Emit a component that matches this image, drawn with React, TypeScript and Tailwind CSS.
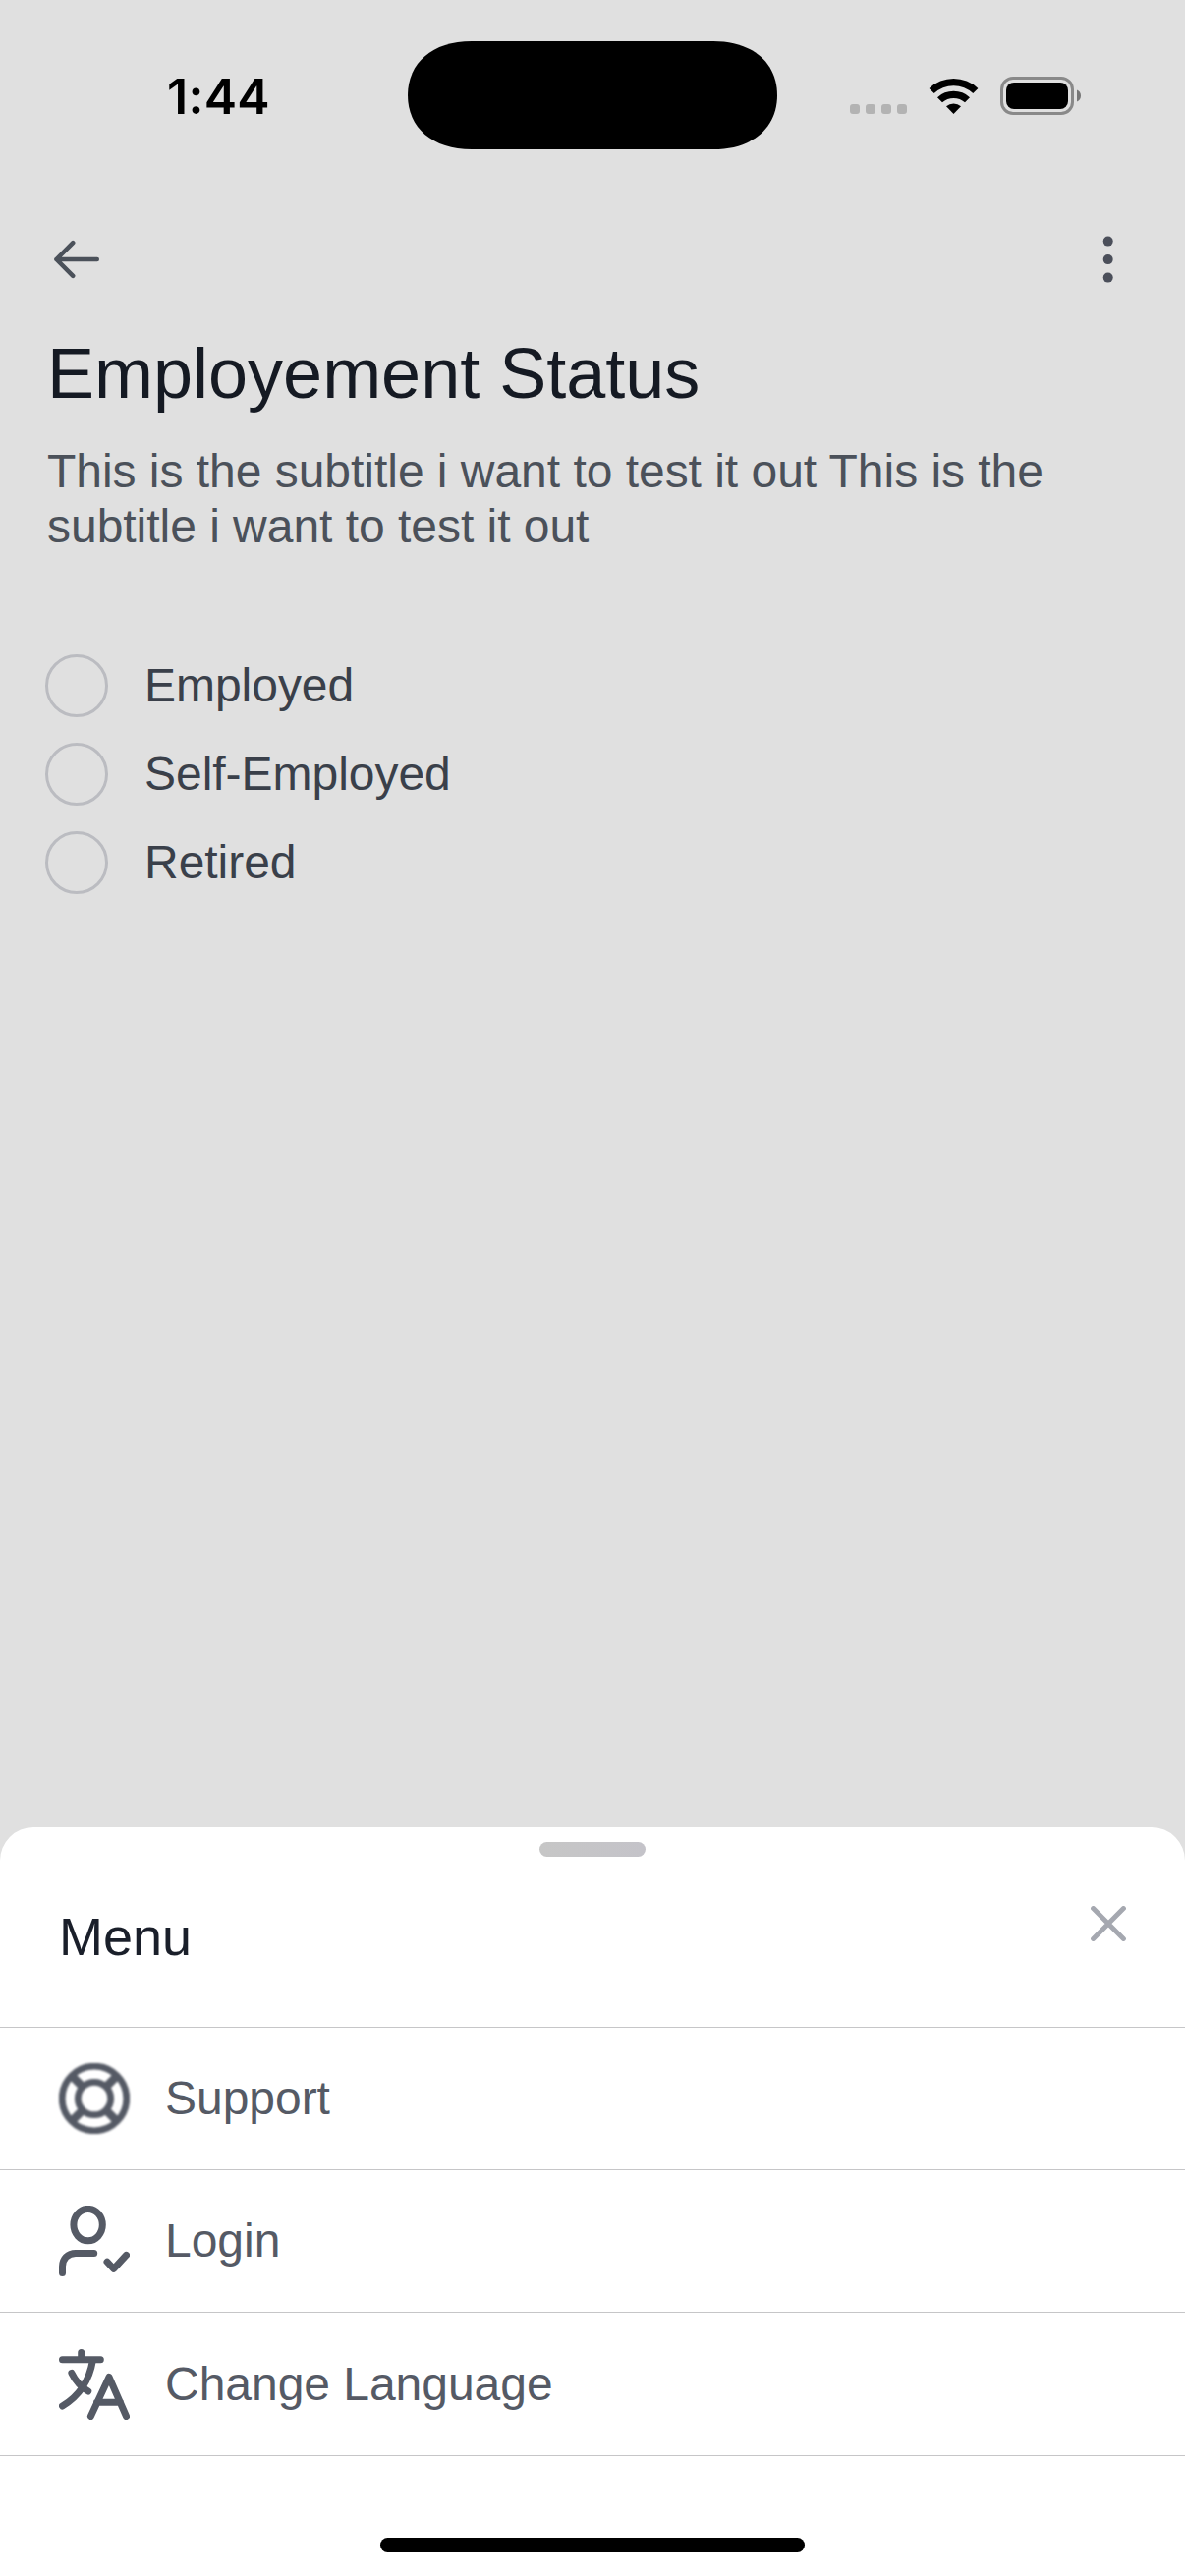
import type { ReactNode } from "react";

const options = ["Employed", "Self-Employed", "Retired"];

function StatusBar() {
  return (
    <div className="flex h-[194px] items-start">
      <div className="mt-[68px] ml-[170px] w-[245px] font-['Inter'] text-[50px] leading-[60px] font-semibold tracking-[0.3px] text-black">
        1:44
      </div>
      <svg className="mt-[42px] h-[110px] w-[376px]" viewBox="0 0 376 110">
        <path d="M65 0H311C351 0 376 22 376 55S351 110 311 110H65C25 110 0 88 0 55S25 0 65 0Z" fill="#000" />
      </svg>
      <div className="mt-[106px] ml-[74px] flex gap-[6px]">
        {[0, 1, 2, 3].map((i) => (
          <span key={i} className="size-[10px] rounded-[3px] bg-[#b3b3b3]" />
        ))}
      </div>
      <svg className="mt-[79px] ml-[22px] h-[37px] w-[51px]" viewBox="0 0 51 37">
        <path d="M0.6 10.9A36 36 0 0 1 50.4 10.9L45.3 16A29 29 0 0 0 5.7 16Z" />
        <path d="M9 20.2A24 24 0 0 1 42 20.2L37 25.2A17.5 17.5 0 0 0 14 25.2Z" />
        <path d="M18 29.2A12 12 0 0 1 33 29.2L25.5 37Z" />
      </svg>
      <svg className="mt-[78px] ml-[22px] h-[39px] w-[84px]" viewBox="0 0 84 39">
        <rect x="1.5" y="1.5" width="72" height="36" rx="11.5" fill="none" stroke="#898989" strokeWidth="3" />
        <rect x="6" y="6" width="63" height="27" rx="8" />
        <path d="M78 13.5C80.6 14.5 82 16.5 82 19.5S80.6 24.5 78 25.5Z" fill="#777" />
      </svg>
    </div>
  );
}

function LifeBuoyIcon() {
  return (
    <svg className="size-[72px] blur-[0.8px]" viewBox="0 0 72 72" fill="none" stroke="#555a65" strokeWidth="6.8">
      <circle cx="36" cy="36" r="32.8" />
      <circle cx="36" cy="36" r="16.7" />
      <path strokeWidth="8.5" d="M13 13L24.500 24.500M59 13L47.500 24.500M13 59L24.500 47.500M59 59L47.500 47.500" />
    </svg>
  );
}

function UserCheckIcon() {
  return (
    <svg className="size-[72px]" viewBox="0 0 72 72" fill="none" stroke="#555a65" strokeWidth="7" strokeLinecap="round" strokeLinejoin="round">
      <ellipse cx="29.6" cy="19.6" rx="14.7" ry="16.2" />
      <path d="M3.5 68.5V62C3.5 54 9 48.4 17 48.4H35.7" />
      <path d="M49 57.200L55.700 64.300L68.500 50.400" />
    </svg>
  );
}

function TranslateIcon() {
  return (
    <svg className="size-[72px]" viewBox="0 0 72 72" fill="none" stroke="#555a65" strokeWidth="7" strokeLinecap="round" strokeLinejoin="round">
      <path d="M3.500 10.700H42.300M22.700 3.500V10.700" />
      <path d="M34.400 11.500C31 32 21 47.500 3.500 58" />
      <path d="M12.900 24.500C16.500 32 22 38.500 29.800 43" />
      <path d="M32.400 68.500L51 28.500L68.500 68.500M38.500 54.200H62.500" />
    </svg>
  );
}

function MenuRow({ icon, label, className }: { icon: ReactNode; label: string; className: string }) {
  return (
    <div className={`flex items-center gap-9 border-b border-[#c6c6c8] pl-[60px] text-[48px] leading-[56px] tracking-[-0.03px] text-[#555a65] ${className}`}>
      {icon}
      <span>{label}</span>
    </div>
  );
}

export default function App() {
  return (
    <div className="flex h-[2622px] w-[1206px] flex-col overflow-hidden bg-[#e0e0e0] font-['Liberation_Sans',sans-serif]">
      <StatusBar />
      <div className="flex h-[140px] items-center justify-between pr-[72px] pl-[54px]">
        <svg className="h-[40px] w-[48px]" viewBox="0 0 48 40" fill="none" stroke="#4b515a" strokeWidth="4.5" strokeLinecap="round" strokeLinejoin="round">
          <path d="M44.8 20H3.4M20.2 3.2L3.4 20L20.2 36.8" />
        </svg>
        <svg className="h-[48px] w-[12px]" viewBox="0 0 12 48" fill="#4b4f5a">
          <circle cx="5.7" cy="5.6" r="5" />
          <circle cx="5.7" cy="24.1" r="5" />
          <circle cx="5.7" cy="42.6" r="5" />
        </svg>
      </div>
      <div className="px-12 pt-1">
        <h1 className="text-[72px] leading-[84px] whitespace-nowrap text-[#151a23]">Employement Status</h1>
        <p className="mt-[30px] text-[48px] leading-[56px] tracking-[-0.03px] whitespace-nowrap text-[#4b515a]">
          This is the subtitle i want to test it out This is the
          <br />
          subtitle i want to test it out
        </p>
        <div className="mt-[89px] flex flex-col">
          {options.map((label) => (
            <div key={label} className="flex h-[90px] items-center gap-[37px]">
              <span className="-ml-0.5 size-[64px] rounded-full border-[3px] border-[#bbbcc1]" />
              <span className="text-[48px] leading-[56px] tracking-[-0.03px] text-[#3a404a]">{label}</span>
            </div>
          ))}
        </div>
      </div>
      <div className="mt-auto flex h-[762px] flex-col rounded-t-[34px] bg-white">
        <div className="flex h-[204px] flex-col border-b border-[#c6c6c8]">
          <div className="mt-[15px] h-[15px] w-[108px] self-center rounded-full bg-linear-to-r from-[#c6c6c6] to-[#c4c3c9]" />
          <div className="mt-[50px] flex items-start justify-between pr-[60px] pl-[60px]">
            <h2 className="text-[54px] leading-[62px] text-[#1a1f2a]">Menu</h2>
            <svg className="size-[36px]" viewBox="0 0 36 36" fill="none" stroke="#a5a8b0" strokeWidth="5" strokeLinecap="round">
              <path d="M2.6 2.6L33.4 33.4M33.4 2.6L2.6 33.4" />
            </svg>
          </div>
        </div>
        <MenuRow icon={<LifeBuoyIcon />} label="Support" className="h-[145px]" />
        <MenuRow icon={<UserCheckIcon />} label="Login" className="h-[145px]" />
        <MenuRow icon={<TranslateIcon />} label="Change Language" className="h-[146px]" />
        <div className="mt-auto mb-6 h-[15px] w-[432px] self-center rounded-full bg-black" />
      </div>
    </div>
  );
}
